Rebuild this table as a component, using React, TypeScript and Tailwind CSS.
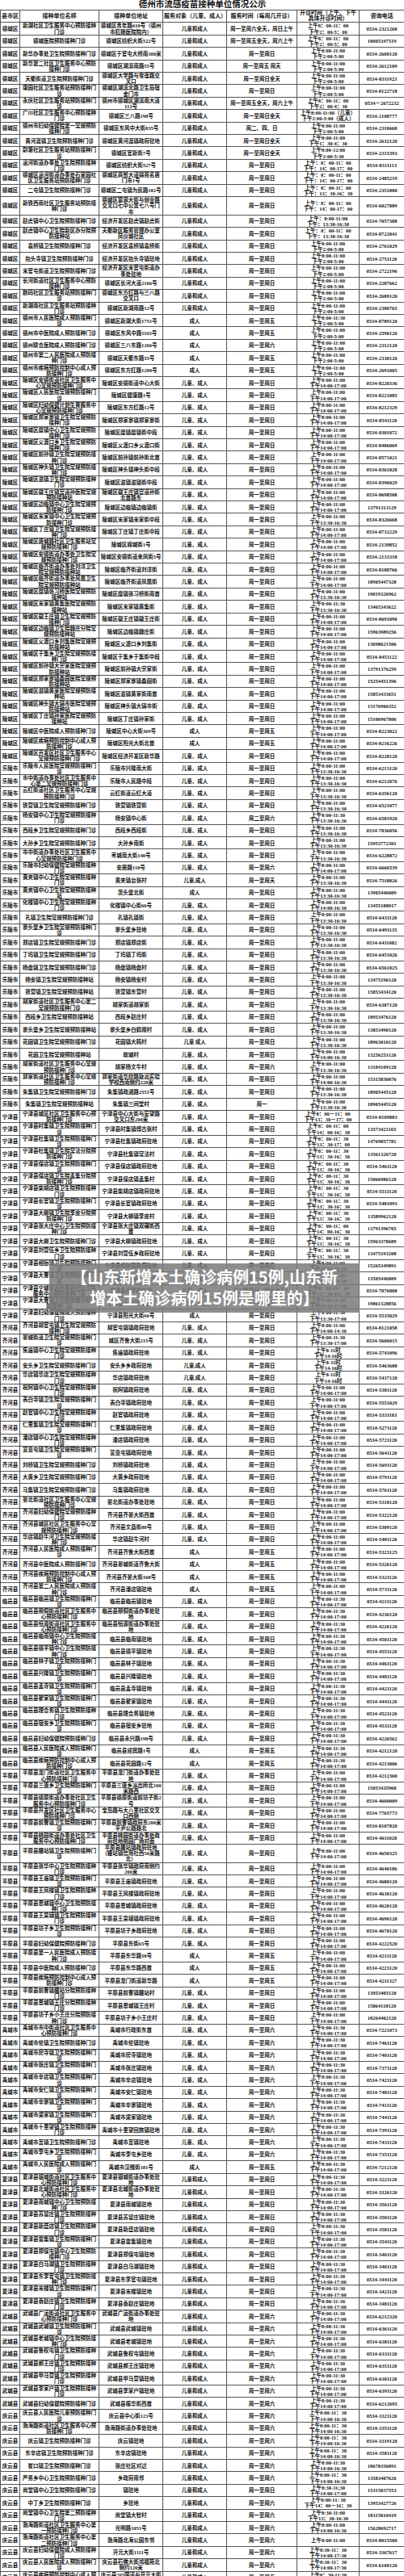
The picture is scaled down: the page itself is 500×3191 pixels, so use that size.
type Row = {
  district: string;
  name: string;
  addr: string;
  phone: string;
  target: string;
  days: string;
  am: string;
  pm: string;
};

// defaults: [服务对象, 服务时间, 上午, 下午]
function parse(district: string, def: [string, string, string, string], text: string): Row[] {
  return text
    .trim()
    .split("\n")
    .map((line) => {
      const [name, addr, phone, days, am, pm, target] = line.trim().split("|");
      return {
        district,
        name,
        addr,
        phone,
        target: target || def[0],
        days: days || def[1],
        am: am || def[2],
        pm: pm === "~" ? "" : pm || def[3],
      };
    });
}

const ROWS: Row[] = [
  ...parse("德城区", ["儿童和成人", "周一至周日", "上午8:00-11:00", "下午2:00-5:00"], `
新湖社区卫生服务中心预防接种门诊|德城区青年路610号（德州市肛肠医院院内）|0534-2321268|周一至周六全天，周日上午|上午8：00-11：00|下午2：00-5：00
德城医院预防接种门诊|德城区纺织大街522号|18005347519|周一至周五全天，周六上午|上午8：00-11：00|下午2：00-5：00
新华办事处卫生院预防接种门诊|德城区于官屯大桥南300米|0534-2600120|周一至周日
新华第二社区卫生服务中心预防接种门诊|德城区湖滨南路55号|0534-2612109|周一至周五 周天
天衢街道卫生院预防接种门诊|德城区大学路与雪莲路交叉口|0534-8311923|周一至周日全天
康园社区卫生服务站预防接种门诊|德城区湖滨北路卫生局宿舍门市|0534-8122718|周一至周日
永庆社区卫生服务站预防接种门诊|德州市德城区湖滨南大道113号|0534－2672232|周一至周五全天，周六上午|上午8：00-11：00|下午2：00-4：30
广川社区卫生服务中心预防接种门诊|德城区三八路198号|0534-2108777|周一至周日全天|上午8:00-11:00（儿童）|下午2:00-5:00（成人）
德州市妇幼保健院第一常规预防接种门诊|德城区东风中大街835号|0534-2310668|周二、四、日
黄河涯镇卫生院预防接种门诊|德城区黄河涯镇政府驻地|0534-2632120|周一至周日全天|上午8:00-11:00|下午1：30-4：30
尉署社区卫生服务站预防接种门诊|德城区官新街7号|0534-2315393|周一至周日全天|上午8:00-12:00|下午2:00-5:30
运河街道办事处卫生院预防接种门诊|德城区纺织大街527号|0534-8311113||上午：8：00-11：00|下午：14：00-17：00
德城区运河街道办事处石家园社区卫生服务站预防接种门诊|德城区商贸大道锦苑名居门市1号|0534-2485219||上午：8：00-11：00|下午：14：00-17：00
二屯镇卫生院预防接种门诊|德城区二屯镇为民路182号|0534-2351800||上午：8：00-11：00|下午：13：30-16：30
新铁西南社区卫生服务站预防接种门诊|德城区富源大街与创业路交叉口七中公寓七八号门市|0534-6027889||上午：8：00-11：00|下午：14：00-17：00
赵虎镇中心卫生院预防接种门诊|经济开发区赵虎镇赵虎街|0534-7057388||上午：8:00-11:00|下午：13:30-16:30
赵虎镇中心卫生院新区办分院预防接种站|天衢新区服务管理办公室凤仪城社区|0534-8722041||上午：8：00-11：00|下午：13:30-16:30
袁桥镇卫生院预防接种门诊|经济开发区袁桥镇袁桥街|0534-2761029
抬头寺镇卫生院预防接种门诊|经济开发区抬头寺镇驻地|0534-2751120
宋官屯街道卫生院预防接种门诊|经济开发区宋官屯街道办事处驻地|0534-2722196
长河街道社区卫生服务中心预防接种门诊|德城区长河大道2166号|0534-2287662
数码社区卫生服务站预防接种门诊|德城区东方红路与三八路交叉口|0534-2689120
新湖南社区卫生服务站预防接种门诊|德城区新湖南路12号|0534-2380765
德州市人民医院成人预防接种门诊|德城区新湖大街1751号|0534-8789120|周一至周五|上午8:00-11:30|下午2:00-5:00|成人
德州市中医院成人预防接种门诊|德城区东风中路1165号|0534-2590120|周一至周五|||成人
德州联合医院成人预防接种门诊|德城区三八东路1266号|0534-2312120|周一至周六|||成人
德州市第二人民医院成人预防接种门诊|德城区天衢东路55号|0534-2330120|周一至周五|||成人
德州市疾病预防控制中心成人预防接种门诊|德城区东方红路1200号|0534-2691005|周一至周五|||成人
`),
  ...parse("陵城区", ["儿童、成人", "周一至周日", "上午8:00-11:00", "下午14:00-17:00"], `
陵城区安德街道社区卫生服务中心常规预防接种门诊|陵城区安德街道中心大街|0534-8220336
陵城区人民医院常规预防接种门诊|陵城区健康路1号|0534-8221085
陵城区妇幼保健计划生育服务中心常规预防接种门诊|陵城区东方红路12号|0534-8212329
陵城区郑家寨镇卫生院常规预防接种门诊|陵城区郑家寨镇郑家寨街|0534-8541120
陵城区糜镇中心卫生院常规预防接种门诊|陵城区糜镇糜镇街中段|0534-8301072
陵城区义渡口乡卫生院常规预防接种门诊|陵城区义渡口乡义渡口街|0534-8486069
陵城区前孙镇卫生院常规预防接种门诊|陵城区前孙镇前孙街北首|0534-8571021
陵城区神头镇卫生院常规预防接种门诊|陵城区神头镇神头街中段|0534-8361028
陵城区滋镇卫生院常规预防接种门诊|陵城区滋镇滋镇街中段|0534-8396029
陵城区徽王庄镇宫道孙医院常规预防接种站|陵城区徽王庄镇宫道孙街北首路东|0534-8698508
陵城区边临镇中心卫生院常规预防接种门诊|陵城区边临镇边临镇街|13791313129
陵城区宋家镇中心卫生院常规预防接种门诊|陵城区宋家镇宋家街中段|0534-8326668||上午8:00-11:00|下午13:30-16:30
陵城区丁庄镇卫生院常规预防接种门诊|陵城区丁庄镇丁庄街中段|0534-8732229
陵城区唐城路社区卫生服务站常规预防接种门诊|陵城区棉城街1号|0534-2139852
陵城区安德街道办事处卫生院常规预防接种门诊|陵城区安德街道来凤街5号|0534-2133318
陵城区临齐街道办事处刘洋卫生院常规预防接种站|陵城区临齐街道刘洋街|0534-8188766
陵城区临齐街道办事处凤凰卫生院常规预防接种站|陵城区临齐街道凤凰街|18905447328
陵城区糜镇张习桥医院常规预防接种站|陵城区糜镇张习桥街南首|19819326962||上午8:00-11:00|下午13:30-16:30
陵城区宋家镇黄集医院常规预防接种站|陵城区宋家镇黄集街|13465343622||上午8:00-11:30|下午13:30-16:30
陵城区徽王庄镇卫生院常规预防接种门诊|陵城区徽王庄镇徽王庄街|0534-8691090
陵城区边临镇卫生院魏庄分院常规预防接种站|陵城区边临镇魏庄街|15963989256
陵城区义渡口乡刘集医院常规预防接种站|陵城区义渡口乡刘集街|13698621506
陵城区于集乡卫生院常规预防接种门诊|陵城区于集乡于集街中段|0534-8451122
陵城区前孙镇大宗家医院常规预防接种站|陵城区前孙镇大宗家街|13791376259
陵城区郑家寨镇桑园医院常规预防接种站|陵城区郑家寨镇桑园街|15254451396
陵城区滋镇黄家医院常规预防接种站|陵城区滋镇黄家街南首|15853433651
陵城区神头镇大锅市医院常规预防接种站|陵城区神头镇大锅市街|13176966352
陵城区丁庄镇孙家医院常规预防接种站|陵城区丁庄镇孙家街|15106967806
陵城区中医院成人预防接种门诊|陵城区中心大街369号|0534-8223022|周一至周五|||成人
陵城区疾病预防控制中心成人预防接种门诊|陵城区阳光大街北首|0534-8216226|周一至周五|||成人
陵城区开发区社区卫生服务中心常规预防接种门诊|陵城区经济开发区新华路|0534-8228120
`),
  ...parse("乐陵市", ["儿童、成人", "周一至周日", "上午8:00-11:00", "下午13:30-16:30"], `
乐陵市人民医院常规预防接种门诊|乐陵市兴隆南大街|0534-6213120
市中街道办事处社区卫生服务中心第二常规预防接种门诊|乐陵市人民路中段|0534-6212076
云红街道社区卫生服务中心常规预防接种门诊|云红街道云红大道|0534-6356120
铁营镇卫生院常规预防接种门诊|铁营镇铁营街|0534-6521077
杨安镇中心卫生院常规预防接种门诊|杨安镇中心街|0534-6581920|周二至周六|上午8:00-11:30
西段乡卫生院常规预防接种门诊|西段乡西段街|0534-7836056
大孙乡卫生院常规预防接种门诊|大孙乡南街|15953772301
市中街道办事处社区卫生服务中心常规预防接种门诊|枣城南大街140号|0534-6228872
乐陵市妇幼保健院常规预防接种门诊|安居路118号|0534-6666539|周一至周六||下午14:00-17:00
黄夹镇中心卫生院常规预防接种门诊|黄夹镇台张村|0534-7518826|周一至周天|||儿童,成人
黄夹镇中心卫生院常规预防接种站|茨头堡北街|13905446009||||成人
化楼镇中心卫生院常规预防接种门诊|化楼镇中心街66号|13455188017|||下午14:00-16:30
孔镇卫生院常规预防接种门诊|孔镇孔镇街|0534-6431120
寨头堡乡卫生院常规预防接种门诊|寨头堡乡驻地|0534-6491135
郑店镇卫生院常规预防接种门诊|郑店镇郑店街|0534-6411082
丁坞镇卫生院常规预防接种门诊|丁坞镇丁坞街|0534-6451026
杨盘镇卫生院常规预防接种门诊|杨盘镇杨盘村|0534-6561025
杨安镇卫生院常规预防接种站|杨安镇杨安村|13475196120
铁营镇卫生院常规预防接种站|铁营镇东营村|15853434120
胡家街道社区卫生服务中心第二常规预防接种门诊|胡家街道胡家街|0534-6307120
西段乡卫生院常规预防接种站|西段乡赵庄村|18953476120
寨头堡乡卫生院常规预防接种站|寨头堡乡白鹤观村|13853490120
花园镇卫生院常规预防接种门诊|花园镇大韩村|18963010120||||儿童 成人
花园卫生院常规预防接种站|故城村|13256251120|||下午14:00-16:30
胡家街道社区卫生服务中心常规预防接种门诊|胡家杨文牛村|13184109120|周一至周六
郭家街道社区卫生服务中心常规预防接种门诊|郭家街道华欣路致远实验学校西南侧约220米|15315830076|||下午14:00-16:30
朱集镇卫生院常规预防接种门诊|朱集镇政通路2551号|18905445120
朱集镇卫生院常规预防接种站|朱集镇三间堂村|18905445120|周一
`),
  ...parse("宁津县", ["儿童、成人", "周一至周日", "上午8：00-11：30", "下午13：30-16：30"], `
宁津县城区社区卫生服务中心预防接种门诊|宁津县中心大街与宏望路交叉口东200米|0534-8109883||上午8：00－11：00|下午13：30－17：00
宁津县时集镇卫生院预防接种门诊|宁津县时集镇傅古张村|13573421165||上午8：00-11：00|下午14：00-16：30
宁津县杜集镇卫生院预防接种门诊|宁津县杜集镇政府驻地|14769857781|||下午13：30-17：00
宁津县杜集镇卫生院常法分院预防接种门诊|宁津县杜集镇常法村|13561326720
宁津县保店镇卫生院预防接种门诊|宁津县保店镇政府驻地|0534-5461120
宁津县保店镇卫生院孟集分院预防接种门诊|宁津县保店镇孟集村|15066986120
宁津县柴胡店镇卫生院预防接种门诊|宁津县柴胡店镇政府驻地|0534-5511120
宁津县长官镇卫生院预防接种门诊|宁津县长官镇政府驻地|0534-5481093
宁津县大柳镇卫生院李皮分院预防接种门诊|宁津县大柳镇李皮村|13589962120
宁津县张大庄中心卫生院预防接种门诊|宁津县张大庄镇双碾街西首|13791396705||上午8：00-11：00|下午14：00-16：30
宁津县大柳卫生院预防接种门诊|宁津县大柳镇政府驻地|15963378689
宁津县刘营伍乡卫生院预防接种门诊|宁津县刘营伍乡政府驻地|13475193208
宁津县相衙镇卫生院预防接种门诊|宁津县相衙镇政府驻地|15265349891||上午8:00-11:00|下午13:30-16:30
宁津县大曹镇卫生院预防接种门诊|宁津县大曹镇政府驻地|13505446809||上午8:00-11:30|下午13:30-16:30
宁津县宁城街道办事处社区卫生服务中心预防接种门诊|宁津县南环路中段|0534-7076808|周二至周日（周六全天）
宁津县大曹镇卫生院张傲分院预防接种门诊|宁津县大曹镇张傲村|19861328856||上午7:30-11:30|下午13:30-17:00
宁津县妇幼保健院成人预防接种门诊|宁津县阳光大街66号|0534-5535029||上午8:00-11:30|下午13:30-17:00|成人
`),
  ...parse("齐河县", ["儿童、成人", "周一至周日", "上午8:00-11:00", "下午14:00-17:00"], `
齐河县胡官屯镇卫生院常规预防接种门诊|胡官屯镇镇政府驻地|0534-8121058|||下午14:00-14:30
晏城街道卫生院常规预防接种门诊|城区齐鲁大街215号|0534-5606015||上午8:00-11:30|下午13:30-17:00
焦庙镇中心卫生院常规预防接种门诊|焦庙镇政府驻地|0534-5741096||上午8-11时|下午14-16时
安头乡卫生院常规预防接种门诊|安头乡乡政府驻地|0534-5463688||上午8-11时|下午14-16时|儿童,成人
华店镇华店卫生院常规预防接种门诊|华店镇政府驻地|0534-5437120||上午8-11时|下午14-16时|儿童,成人
祝阿镇中心卫生院常规预防接种门诊|祝阿镇政府驻地|0534-5381120
表白寺镇卫生院常规预防接种门诊|表白寺镇政府驻地|0534-5551029
赵官镇中心卫生院常规预防接种门诊|赵官镇政府驻地|0534-5331103
仁里集镇卫生院常规预防接种门诊|仁里集镇政府驻地|0534-5271120
潘店镇中心卫生院常规预防接种门诊|潘店镇政府驻地|0534-5721120
宣章屯镇卫生院常规预防接种门诊|宣章屯镇政府驻地|0534-5641120
刘桥镇卫生院常规预防接种门诊|刘桥镇政府驻地|0534-5691120
大黄乡卫生院常规预防接种门诊|大黄乡政府驻地|0534-5791120
马集镇卫生院常规预防接种门诊|马集镇政府驻地|0534-5761120
晏北街道社区卫生服务中心常规预防接种门诊|晏北街道办事处驻地|0534-5318120
齐河县妇幼保健院常规预防接种门诊|齐河县齐晏大街西首|0534-5322120
齐河县城区社区卫生服务中心常规预防接种门诊|齐河县文昌街88号|0534-5309120
华店镇赵牛河卫生院常规预防接种门诊|华店镇赵牛河村|0534-5481120
齐河县人民医院成人预防接种门诊|齐河县齐鲁大街西首|0534-5323125|周一至周五|||成人
齐河县中医院成人预防接种门诊|齐河县晏城街道齐鲁大街|0534-5326120|周一至周五|||成人
齐河县疾病预防控制中心成人预防接种门诊|齐河县齐晏大街168号|0534-5321126|周一至周五|||成人
齐河县第二人民医院成人预防接种门诊|齐河县潘店镇驻地|0534-5731120|周一至周五|||成人
`),
  ...parse("临邑县", ["儿童、成人", "周一至周日", "上午8:00-11:30", "下午14:00-17:00"], `
临邑县临邑镇卫生院预防接种门诊|临邑县临邑镇驻地|0534-4211120
临邑县邢侗街道社区卫生服务中心预防接种门诊|临邑县邢侗街道办事处驻地|0534-4236120
临邑县恒源街道社区卫生服务中心预防接种门诊|临邑县恒源街道办事处驻地|0534-4226120
临邑县临南镇中心卫生院预防接种门诊|临邑县临南镇驻地|0534-4501120
临邑县德平镇中心卫生院预防接种门诊|临邑县德平镇驻地|0534-4551120
临邑县林子镇卫生院预防接种门诊|临邑县林子镇驻地|0534-4461120
临邑县兴隆镇卫生院预防接种门诊|临邑县兴隆镇驻地|0534-4481120
临邑县孟寺镇卫生院预防接种门诊|临邑县孟寺镇驻地|0534-4421120
临邑县翟家镇卫生院预防接种门诊|临邑县翟家镇驻地|0534-4441120
临邑县理合务镇卫生院预防接种门诊|临邑县理合务镇驻地|0534-4521120
临邑县宿安乡卫生院预防接种门诊|临邑县宿安乡驻地|0534-4531120
临邑县妇幼保健院预防接种门诊|临邑县永兴路198号|0534-4226562
临邑县人民医院成人预防接种门诊|临邑县迎宾路1号|0534-4212120|周一至周五|||成人
临邑县疾病预防控制中心成人预防接种门诊|临邑县花园路12号|0534-4213006|周一至周五|||成人
`),
  ...parse("平原县", ["儿童、成人", "周一至周日", "上午8:00-11:00", "下午14:00-17:00"], `
平原县龙门街道社区卫生服务中心预防接种门诊|平原县龙门街道办事处驻地|0534-4212360
平原县三唐乡卫生院预防接种门诊|平原县三唐乡派出所北100米路西|15053435968
平原县德原街道办事处社区卫生服务中心预防接种门诊|平原县德原街道前坊子街2号|0534-4660009
平原县开发区社区卫生服务中心预防接种门诊|宝岛路与大八里社区交叉口西侧|0534-7765773
平原县前曹镇卫生院预防接种门诊|平原县前曹镇政府东200米平尹公路路北|0534-8107820
平原县桃园街道办事处社区卫生服务中心预防接种门诊|平原县桃园街道办事处政府驻地桃园广场对面|0534-4611020
平原县腰站镇卫生院预防接种门诊|平原县腰站镇政府驻地（腰站镇信用社西50米路北）|0534-4650325
平原县张华中心卫生院预防接种门诊|平原县张华镇政府南侧约200米|0534-4640186
平原县王庙镇卫生院预防接种门诊|平原县王庙镇政府驻地|0534-4680120
平原县王凤楼镇卫生院预防接种门诊|平原县王凤楼镇政府驻地|0534-4630120
平原县恩城镇中心卫生院预防接种门诊|平原县恩城镇政府驻地|0534-4620120
平原县王杲铺镇卫生院预防接种门诊|平原县王杲铺镇政府驻地|0534-4690120
平原县坊子乡卫生院预防接种门诊|平原县坊子乡政府驻地|0534-4670120
平原县妇幼保健院预防接种门诊|平原县东街65号|0534-4222520
平原县第一人民医院成人预防接种门诊|平原县东华路58号|0534-4211120|周一至周五|||成人
平原县中医院成人预防接种门诊|平原县东华路西首|0534-4223120|周一至周五|||成人
平原县疾病预防控制中心成人预防接种门诊|平原县龙门街道新华路|0534-4211327|周一至周五|||成人
平原县前曹镇腰站分院预防接种门诊|平原县前曹镇腰站村|13953405120
平原县恩城镇王庄分院预防接种门诊|平原县恩城镇王庄村|15864118120
平原县坊子乡小王庄分院预防接种门诊|平原县坊子乡小王庄村|18264402120
`),
  ...parse("禹城市", ["儿童、成人", "周一至周六", "上午8:00-11:30", "下午14:00-17:00"], `
禹城市市中街道社区卫生服务中心预防接种门诊|禹城市行政街东首|0534-7221073
禹城市伦镇卫生院预防接种门诊|禹城市伦镇驻地|0534-7461120
禹城市房寺镇卫生院预防接种门诊|禹城市房寺镇驻地|0534-7401120
禹城市张庄镇卫生院预防接种门诊|禹城市张庄镇驻地|0534-7371120
禹城市辛店镇卫生院预防接种门诊|禹城市辛店镇驻地|0534-7421120
禹城市安仁镇卫生院预防接种门诊|禹城市安仁镇驻地|0534-7481120
禹城市辛寨镇卫生院预防接种门诊|禹城市辛寨镇驻地|0534-7411120
禹城市梁家镇卫生院预防接种门诊|禹城市梁家镇驻地|0534-7441120
禹城市十里望镇卫生院预防接种门诊|禹城市十里望回族镇驻地|0534-7391120
禹城市莒镇卫生院预防接种门诊|禹城市莒镇驻地|0534-7431120
禹城市李屯乡卫生院预防接种门诊|禹城市李屯乡驻地|0534-7351120
禹城市人民医院成人预防接种门诊|禹城市汉槐街181号|0534-7212120|周一至周五|||成人
`),
  ...parse("夏津县", ["儿童和成人", "周一至周日", "上午8:00-11:30", "下午14:00-17:00"], `
夏津县银城街道社区卫生服务中心预防接种门诊|夏津县银城街道办事处驻地|0534-3221120
夏津县北城街道社区卫生服务中心预防接种门诊|夏津县北城街道办事处驻地|0534-3326120
夏津县南城镇中心卫生院预防接种门诊|夏津县南城镇驻地|0534-3561120
夏津县苏留庄镇卫生院预防接种门诊|夏津县苏留庄镇驻地|0534-3501120
夏津县新盛店镇卫生院预防接种门诊|夏津县新盛店镇驻地|0534-3581120
夏津县雷集镇卫生院预防接种门诊|夏津县雷集镇驻地|0534-3541120
夏津县郑保屯镇中心卫生院预防接种门诊|夏津县郑保屯镇驻地|0534-3461120
夏津县白马湖镇卫生院预防接种门诊|夏津县白马湖镇驻地|0534-3401120
夏津县东李官屯镇卫生院预防接种门诊|夏津县东李官屯镇驻地|0534-3441120
夏津县宋楼镇卫生院预防接种门诊|夏津县宋楼镇驻地|0534-3421120
夏津县香赵庄镇卫生院预防接种门诊|夏津县香赵庄镇驻地|0534-3481120
`),
  ...parse("武城县", ["儿童和成人", "周一至周六", "上午8:00-11:30", "下午14:00-17:00"], `
武城县广运街道社区卫生服务中心预防接种门诊|武城县广运街道办事处驻地|0534-6212320
武城县武城镇卫生院预防接种门诊|武城县武城镇驻地|0534-6361120
武城县老城镇中心卫生院预防接种门诊|武城县老城镇驻地|0534-6381120
武城县鲁权屯镇卫生院预防接种门诊|武城县鲁权屯镇驻地|0534-6331120
武城县郝王庄镇卫生院预防接种门诊|武城县郝王庄镇驻地|0534-6351120
武城县甲马营镇卫生院预防接种门诊|武城县甲马营镇驻地|0534-6301120
武城县李家户镇卫生院预防接种门诊|武城县李家户镇驻地|0534-6391120
武城县妇幼保健院预防接种门诊|武城县振华街西首|0534-6212695
`),
  ...parse("庆云县", ["儿童和成人", "周一至周六", "上午8:00-11：30", "下午14:00-16:30"], `
庆云县人民医院儿童预防接种门诊|庆云县中心街123号|0534-3321120
渤海路街道社区卫生服务中心预防接种门诊|渤海路街道办事处驻地|0534-3351120
庆云镇卫生院预防接种门诊|庆云镇驻地|0534-3319120
东辛店镇卫生院预防接种门诊|东辛店镇驻地|0534-3581120
崔口镇卫生院预防接种门诊|张庄社区对过|18678356891||上午8:00-11:30|下午14:00-16:30
严务乡中心卫生院预防接种门诊|乡政府南邻|13583407626
尚堂镇中心卫生院预防接种门诊|镇驻地|15315837553|周一至周日|上午8:30-11;30|下午14:00-17:00
中丁乡卫生院预防接种门诊|乡驻地|13953427726||上午8:00-11: 30|下午14：00－16：30
尚堂镇中心卫生院第二预防接种门诊|尚堂镇大智村|18315810419||上午8:30-11:00|下午13：30-16:30
渤海路街道社区卫生服务中心第一预防接种门诊|光明路1051号|15628692717||上午8:00-11:00|下午14:00-16:30
渤海路街道社区卫生服务中心第二预防接种门诊|渤海路北海公园东邻|0534-8015500||上午8:00-11:00|~
庆云县妇幼保健院成人预防接种门诊|开元大街1111号|0534-3367617||上午8:30-11：30|下午14:00-17:30
庆云县人民医院成人预防接种门诊|庆云县石佛大街鸿福苑北侧约120米|0534-6100120||上午8:30-11：30|下午14:00-17:30
庆云县疾病预防控制中心成人预防接种门诊|庆云县205国道与开元大街交叉口北480米|0534-7084213|周一至周五|上午8：30-11:30|下午14:00-17:00
`),
];

const cell =
  "border border-[#555] px-[1px] py-0 text-center align-middle text-[6.5px] leading-[7.2px] font-bold";
const head =
  "border border-[#555] px-[1px] py-0 text-center align-middle text-[7px] leading-[7.2px] font-bold";

export default function App() {
  return (
    <div className="relative w-[500px] bg-white font-['Liberation_Serif','Noto_Sans_CJK_SC',serif] text-[#111]">
      <table className="w-full table-fixed border-collapse">
        <colgroup>
          <col className="w-[24px]" />
          <col className="w-[98px]" />
          <col className="w-[79px]" />
          <col className="w-[79px]" />
          <col className="w-[87px]" />
          <col className="w-[77px]" />
          <col className="w-[56px]" />
        </colgroup>
        <thead>
          <tr className="h-[12px]">
            <td
              colSpan={7}
              className="border-b border-[#555] p-0 text-center text-[10.5px] leading-[12px] font-bold"
            >
              德州市流感疫苗接种单位情况公示
            </td>
          </tr>
          <tr className="h-[15px]">
            <td className={head}>县市区</td>
            <td className={head}>接种单位名称</td>
            <td className={head}>接种单位地址</td>
            <td className={head}>服务对象（儿童、成人）</td>
            <td className={head}>服务时间（每周几开诊）</td>
            <td className={head}>开诊时间（上午、下午具体开诊时间）</td>
            <td className={head}>咨询电话</td>
          </tr>
        </thead>
        <tbody>
          {ROWS.map((r, i) => (
            <tr key={i}>
              <td className={cell}>{r.district}</td>
              <td className={cell}>{r.name}</td>
              <td className={cell}>{r.addr}</td>
              <td className={cell}>{r.target}</td>
              <td className={cell}>{r.days}</td>
              <td className={cell}>
                <div>{r.am}</div>
                {r.pm && <div>{r.pm}</div>}
              </td>
              <td className={cell}>{r.phone}</td>
            </tr>
          ))}
        </tbody>
      </table>

      <div className="absolute left-[61px] top-[1565px] w-[384px] bg-[#7a7a7a]/85 px-[22px] pb-[5px] pt-[4px] text-center font-['Noto_Sans_CJK_SC',sans-serif] text-[20px] leading-[26px] font-bold text-white">
        【山东新增本土确诊病例15例,山东新增本土确诊病例15例是哪里的】
      </div>
    </div>
  );
}
